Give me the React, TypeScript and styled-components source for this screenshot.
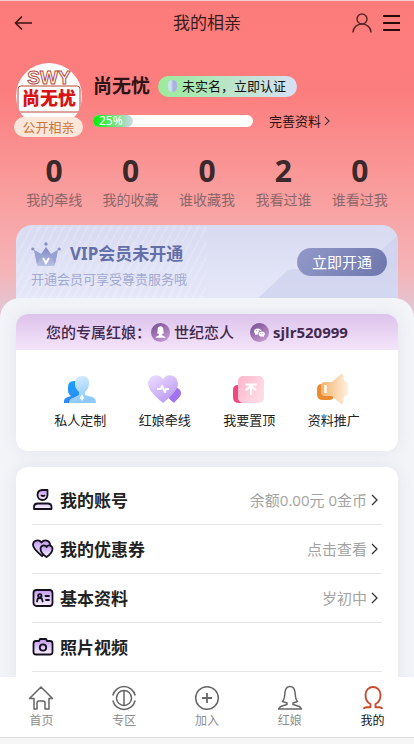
import React from "react";
import styled, { createGlobalStyle } from "styled-components";

const GlobalStyle = createGlobalStyle`
  * { box-sizing: border-box; }
  body {
    margin: 0;
    background: #f5f5f5;
    color: #222;
    font-family: "Noto Sans", "Noto Sans CJK SC", sans-serif;
  }
  button { font: inherit; color: inherit; border: 0; padding: 0; background: none; cursor: pointer; }
  a { color: inherit; text-decoration: none; }
  h1, h2, p { margin: 0; }
  svg { display: block; flex: none; }
`;

const Page = styled.div`
  height: 100vh;
  display: flex;
  flex-direction: column;
  border-top: 1px solid #f3cfcf;
`;

const Content = styled.main`
  flex: 1;
  min-height: 0;
  overflow: hidden auto;
  scrollbar-width: none;
  background: #f3f4f8;
`;

const Hero = styled.section`
  background:
    linear-gradient(to bottom, #fc7c7c 0, #fc7d7d 90px, #f9a0a0 200px, #f6b4b8 270px, #dccbdc 320px);
`;

const Header = styled.header`
  display: grid;
  grid-template-columns: 60px 1fr 60px;
  align-items: center;
  height: 44px;
  padding: 0 12px;
`;

const Title = styled.h1`
  font-size: 17px;
  line-height: 24px;
  font-weight: 400;
  text-align: center;
  color: #3a1c1c;
`;

const HeaderActions = styled.div`
  display: flex;
  justify-content: flex-end;
  align-items: center;
  gap: 9px;
`;

const Profile = styled.div`
  display: flex;
  gap: 10px;
  padding: 18px 16px 0 14px;
`;

const AvatarBlock = styled.div`
  display: flex;
  flex-direction: column;
  align-items: center;
  width: 69px;
`;

const Visibility = styled.button`
  && {
    width: 69px;
    height: 20px;
    margin-top: -12px;
    border-radius: 10px;
    background: #fce6da;
    color: #c87838;
    font-size: 13px;
    line-height: 20px;
    position: relative;
  }
`;

const ProfileInfo = styled.div`
  flex: 1;
  padding-top: 9px;
`;

const NameRow = styled.div`
  display: flex;
  align-items: center;
  gap: 8px;
  height: 28px;
`;

const Name = styled.h2`
  font-size: 19px;
  line-height: 28px;
  font-weight: 700;
  color: #2c1417;
`;

const VerifyButton = styled.button`
  && {
    display: flex;
    align-items: center;
    gap: 5px;
    height: 21px;
    padding: 0 11px 0 10px;
    border-radius: 11px;
    background: linear-gradient(to right, #9beb9b, #d8e0f4);
    color: #111;
    font-size: 13px;
    line-height: 21px;
    font-weight: 400;
  }
`;

const VerifyDot = styled.span`
  width: 9px;
  height: 12px;
  border-radius: 5px;
  background: linear-gradient(to right, #cfe0f0 30%, #a9b3e0 60%);
`;

const ProgressRow = styled.div`
  display: flex;
  align-items: center;
  gap: 16px;
  margin-top: 10px;
`;

const Track = styled.div`
  width: 160px;
  height: 12px;
  border-radius: 6px;
  background: #fff;
`;

const Fill = styled.div`
  display: flex;
  align-items: center;
  height: 12px;
  padding-left: 6px;
  border-radius: 6px;
  background: linear-gradient(to right, #00f000, #cfd8ea);
  color: #fff;
  font-size: 12px;
  line-height: 18px;
`;

const CompleteLink = styled.a`
  display: flex;
  align-items: center;
  gap: 2px;
  font-size: 13px;
  line-height: 22px;
  color: #2a1212;
`;

const Stats = styled.div`
  display: grid;
  grid-template-columns: repeat(5, 1fr);
  padding: 14px 16px 0;
`;

const Stat = styled.a`
  text-align: center;
  font-size: 14px;
  line-height: 20px;
  color: #8e6668;
`;

const StatValue = styled.strong`
  display: block;
  font-size: 30px;
  line-height: 39px;
  font-weight: 700;
  color: #3a282b;
`;

const VipCard = styled.div`
  position: relative;
  display: flex;
  justify-content: space-between;
  height: 93px;
  margin: 15px 16px 0;
  padding: 14px 11px 0 15px;
  border-radius: 16px 16px 0 0;
  overflow: hidden;
  background:
    repeating-linear-gradient(118deg, rgba(255, 255, 255, 0.14) 0 2px, transparent 2px 7px) left / 190px 100% no-repeat,
    linear-gradient(to bottom, #d8dbf1, #e6e8f9 74px);
`;

const VipShade = styled.svg`
  position: absolute;
  right: 0;
  top: 0;
`;

const VipHeading = styled.div`
  display: flex;
  align-items: center;
  gap: 9px;
  height: 30px;
  color: #646fa8;
  font-size: 17px;
  line-height: 30px;
  font-weight: 700;
`;

const VipNote = styled.p`
  font-size: 13px;
  line-height: 20px;
  color: #a1a9d0;
`;

const VipButton = styled.button`
  && {
    position: relative;
    width: 90px;
    height: 28px;
    margin-top: 9px;
    border-radius: 14px;
    background: linear-gradient(120deg, #9299c9, #6e77ac);
    color: #fff;
    font-size: 15px;
    line-height: 28px;
  }
`;

const Sheet = styled.div`
  position: relative;
  display: grid;
  gap: 16px;
  margin-top: -20px;
  padding: 16px 16px 0;
  border-radius: 20px 20px 0 0;
  background: #f3f4f8;
`;

const Card = styled.section`
  border-radius: 12px;
  overflow: hidden;
  background: #fff;
  box-shadow: 0 0 16px rgba(90, 100, 130, 0.1);
`;

const Matchmaker = styled.div`
  display: flex;
  align-items: center;
  height: 36px;
  padding-left: 30px;
  background: linear-gradient(to bottom, #ddc3ec, #f4e4fa);
  color: #43294e;
  font-size: 15px;
  line-height: 36px;
  font-weight: 500;
`;

const Contact = styled.span<{ $bold?: boolean }>`
  display: flex;
  align-items: center;
  gap: 4px;
  margin-right: 16px;
  font-family: ${(p) => (p.$bold ? '"Open Sans", "Noto Sans CJK SC", sans-serif' : "inherit")};
  font-weight: ${(p) => (p.$bold ? 700 : 500)};
`;

const Services = styled.div`
  display: grid;
  grid-template-columns: repeat(4, 1fr);
  padding: 20px 22px;
`;

const Service = styled.a`
  display: flex;
  flex-direction: column;
  align-items: center;
  height: 61px;
  font-size: 13px;
  line-height: 20px;
`;

const Menu = styled(Card)`
  padding: 9px 16px 30px;
`;

const MenuRow = styled.a`
  display: flex;
  align-items: center;
  height: 49px;
  border-bottom: 1px solid #e6e6e8;
`;

const MenuName = styled.span`
  flex: 1;
  padding: 2px 0 0 6px;
  font-size: 17px;
  line-height: 26px;
  font-weight: 700;
`;

const MenuValue = styled.span`
  padding-right: 3px;
  font-family: "Open Sans", "Noto Sans CJK SC", sans-serif;
  font-size: 15px;
  line-height: 24px;
  color: #a3a3a3;
`;

const TabBar = styled.nav`
  display: grid;
  grid-template-columns: repeat(5, 1fr);
  height: 61px;
  padding-top: 8px;
  margin-bottom: 6px;
  background: #fff;
  border-bottom: 1px solid #dedede;
`;

const Tab = styled.a<{ $active?: boolean }>`
  display: flex;
  flex-direction: column;
  align-items: center;
  font-size: 12px;
  line-height: 20px;
  color: ${(p) => (p.$active ? "#111" : "#8d8d8d")};
`;

const ValueChevron = styled.span`
  padding-right: 3px;
`;

const Chevron = ({ size = 12 }: { size?: number }) => (
  <svg width={size / 2 + 3} height={size} viewBox="0 0 9 12" fill="none" stroke="#333" strokeWidth="1.3">
    <path d="M2 1l5 5-5 5" />
  </svg>
);

const Avatar = () => (
  <svg width="66" height="66" viewBox="0 0 66 66" role="img" aria-label="SWY 尚无忧">
    <clipPath id="round"><circle cx="33" cy="33" r="33" /></clipPath>
    <g clipPath="url(#round)">
      <rect width="66" height="66" fill="#fff" />
      <text x="33" y="21" textAnchor="middle" fontFamily="Liberation Sans" fontWeight="700" fontSize="19" fill="#fff" stroke="#b84a40" strokeWidth="1">SWY</text>
      <path d="M2 49V26q0-3 3-3h56q3 0 3 3v23z" fill="none" stroke="#b8453c" />
      <text x="33" y="42" textAnchor="middle" fontFamily="Noto Sans CJK SC" fontWeight="900" fontSize="18" fill="#d81414">尚无忧</text>
    </g>
  </svg>
);

const Crown = () => (
  <svg width="30" height="25" viewBox="0 0 30 25">
    <defs>
      <linearGradient id="crown" x2="0" y2="1"><stop stopColor="#7d88c2" /><stop offset="1" stopColor="#b9c0e5" /></linearGradient>
    </defs>
    <path d="M3 8l7 4 5-7 5 7 7-4-3 14q0 2-2 2H8q-2 0-2-2z" fill="url(#crown)" />
    <path d="M3 8l7 4-4 10zM27 8l-7 4 4 10z" fill="#98a2d4" />
    <g fill="#8790c4"><circle cx="15" cy="2" r="1.7" /><circle cx="1.8" cy="7" r="1.6" /><circle cx="28.2" cy="7" r="1.6" /></g>
    <path d="M12 16l3 5 3-5" fill="none" stroke="#fff" strokeWidth="2" />
  </svg>
);

const womanPath = "M9.8 16.5H8.5c1-1.5.6-3 1-5C9.500 6 12 5 14 5s4.500 1 4.500 6.500c.4 2 0 3.500 1 5h-1.300l-1.700 1v2l5 2.500v1.500h-15V22l5-2.500v-2z";

const RoundIcon = ({ kind }: { kind: "woman" | "chat" }) => (
  <svg width="19" height="19" viewBox="0 0 28 28">
    <defs><linearGradient id="plum" x2="0.600" y2="1"><stop stopColor="#754a8e" /><stop offset="1" stopColor="#c197ce" /></linearGradient></defs>
    <circle cx="14" cy="14" r="14" fill="url(#plum)" />
    {kind === "woman" ? (
      <path d={womanPath} transform="translate(1 0) scale(.93)" fill="#fff" />
    ) : (
      <g fill="#fff">
        <path d="M11.500 8C8.300 8 6 10 6 12.500c0 1.500.8 2.700 2 3.500l-.5 2 2.300-1.200 2 .2C11.500 13.500 13.500 11.500 17 11.500 16.500 9.500 14.300 8 11.500 8z" />
        <path d="M17.300 12.500c-2.700 0-4.700 1.700-4.700 3.800s2 3.800 4.700 3.800l1.500-.2 1.800 1-.4-1.700c1.100-.7 1.800-1.700 1.800-2.900 0-2.100-2-3.800-4.700-3.800z" />
        <g fill="#8c62a2"><circle cx="9.700" cy="11.500" r=".8" /><circle cx="13.500" cy="11.500" r=".8" /><circle cx="15.800" cy="15.500" r=".7" /><circle cx="19" cy="15.500" r=".7" /></g>
      </g>
    )}
  </svg>
);

const ServiceIcon = ({ kind }: { kind: string }) => (
  <svg width="40" height="40" viewBox="0 0 40 40">
    <defs>
      <linearGradient id="blue" x2="0" y2="1"><stop stopColor="#18a0ff" /><stop offset="1" stopColor="#3188f4" /></linearGradient>
      <linearGradient id="ice" x2="0.300" y2="1"><stop stopColor="#d9efff" /><stop offset="1" stopColor="#8dc9fc" /></linearGradient>
      <linearGradient id="lilac" x2="0.700" y2="1"><stop stopColor="#eee1ff" /><stop offset="1" stopColor="#bc98f2" /></linearGradient>
      <linearGradient id="rose" x2="1" y2="0.500"><stop stopColor="#ffb4cb" /><stop offset="1" stopColor="#ffdce6" /></linearGradient>
      <linearGradient id="peach" x2="1"><stop stopColor="#f5b36d" /><stop offset="1" stopColor="#fff0dd" /></linearGradient>
    </defs>
    {kind === "person" && (
      <g>
        <path d="M8 17q0-6 6-6h6v16q-3 2-6 6H4v-2q0-3 4-4l3-1q-3-2-3-6z" fill="url(#blue)" />
        <path d="M22 6c5 0 7.500 3 7 8-.3 4-2 6-4 8v3l7 2q4 1 4 6H9q0-4 4-5l6-3v-3c-2-2-4-4-4-8 0-5 2-8 7-8z" fill="url(#ice)" />
        <path d="M22 24l2 4-2 3-2-3z" fill="#fff" />
      </g>
    )}
    {kind === "heart" && (
      <g>
        <path d="M28 18c4-1 8 1 8 5s-3 5-7 10q-4-3-6-6z" fill="#a372ee" />
        <path d="M18 33Q3 21 3 14C3 5 14 2 18 9 22 2 33 5 33 14q0 7-15 19z" fill="url(#lilac)" />
        <path d="M12 19h4l1-3 3 6 1-3h3" fill="none" stroke="#fff" strokeWidth="2" strokeLinejoin="round" />
      </g>
    )}
    {kind === "top" && (
      <g>
        <path d="M9 15h8v18h-7q-6 0-6-6v-7q0-5 5-5z" fill="#ee497f" />
        <rect x="9" y="6" width="26" height="27" rx="5" fill="url(#rose)" />
        <path d="M16.500 14.500h11M22 25v-9M17 20l5-4 5 4" fill="none" stroke="#fff" strokeWidth="2.200" />
      </g>
    )}
    {kind === "horn" && (
      <g>
        <path d="M8 14h12v11q0 5-5 5H9q-6 0-6-6v-5q0-5 5-5z" fill="#ea8b30" />
        <path d="M11 12h7l9-8q2-1 2 1l1 5 4 3v11l-4 3-1 6q0 2-2 1l-9-8h-7q-4 0-4-4v-6q0-4 4-4z" fill="url(#peach)" />
        <path d="M11.500 15v8" stroke="#fff" strokeWidth="2.400" />
      </g>
    )}
  </svg>
);

const MenuIcon = ({ kind }: { kind: string }) => (
  <svg width="22" height="22" viewBox="0 0 22 22" fill="url(#soft)" stroke="#15101e" strokeWidth="1.800" strokeLinejoin="round" strokeLinecap="round">
    <defs><linearGradient id="soft" x2="0" y2="1"><stop stopColor="#c29bed" /><stop offset="1" stopColor="#f8f0ff" /></linearGradient></defs>
    {kind === "account" && (
      <g><path d="M5.500 6q0-5 5-5h5v5a5 5 0 0 1-10 0z" /><path d="M9.500 6.500q1.500 1 3 0M2 20v-2q0-3.500 4-3.500h9.500q4 0 4 3.500v2z" /></g>
    )}
    {kind === "coupon" && (
      <g><path d="M10 18C4 13 1 10 1 7c0-5 6-6 8.500-2.500C12 1 18 2 18 7c0 3-2 6-8 11z" /><path d="M14.500 19q-6-4-6-8c0-4 4.500-4.500 6-2 1.500-2.500 6-2 6 2q0 4-6 8z" /></g>
    )}
    {kind === "card" && (
      <g><rect x="1.500" y="3" width="19" height="16" rx="3" /><path d="M5 14.500l.8-3q2-1 4 0l.8 3M13.500 9H17M14 13h3" /><circle cx="7.800" cy="8.800" r="1.700" /></g>
    )}
    {kind === "camera" && (
      <g><path d="M7 5l1-2h6l1 2h3q2.500 0 2.500 2.500V16q0 2.500-2.500 2.500H4Q1.500 18.500 1.500 16V7.500Q1.500 5 4 5z" /><circle cx="11" cy="11.500" r="3.200" /></g>
    )}
  </svg>
);

const TabIcon = ({ kind }: { kind: string }) => (
  <svg width="26" height="26" viewBox="0 0 26 26" fill="none" stroke={kind === "me" ? "#c94b2f" : "#666"} strokeWidth="1.500" strokeLinejoin="round">
    {kind === "home" && <path d="M1.500 13.500L13 2l11.500 11.500H21V24h-4v-6q0-2-2-2h-4q-2 0-2 2v6H6V13.500z" />}
    {kind === "zone" && (
      <g><circle cx="13" cy="13" r="7.500" /><path d="M13 5.500v15M1.800 10.500A11.500 11.500 0 0 1 24.200 10.500M1.800 15.500a11.500 11.500 0 0 0 22.400 0" /></g>
    )}
    {kind === "join" && <g><circle cx="13" cy="13" r="11.300" /><path d="M13 8v10M8 13h10" strokeWidth="1.800" /></g>}
    {kind === "woman" && <path d="M5.500 16.500C8 14 7.500 10 8 7c.6-4 2.500-5.500 5-5.500S17.400 3 18 7c.5 3 0 7 2.500 9.500L16 18v1.500l6.500 2 2 2.500h-23l2-2.500 6.500-2V18z" />}
    {kind === "me" && <path d="M4 24q0-1.800 3-1.800h3.500v-3C7 17.500 5.500 13.500 5.500 9.800 5.500 5 9 2 13 2s7.500 3 7.500 7.800c0 3.700-1.500 7.700-5 9.400v3H19q3 0 3 1.800" strokeWidth="1.900" />}
  </svg>
);

const stats = [["0", "我的牵线"], ["0", "我的收藏"], ["0", "谁收藏我"], ["2", "我看过谁"], ["0", "谁看过我"]];
const services = [["person", "私人定制"], ["heart", "红娘牵线"], ["top", "我要置顶"], ["horn", "资料推广"]];
const menu = [["account", "我的账号", "余额0.00元 0金币"], ["coupon", "我的优惠券", "点击查看"], ["card", "基本资料", "岁初中"], ["camera", "照片视频", ""]];
const tabs = [["home", "首页"], ["zone", "专区"], ["join", "加入"], ["woman", "红娘"], ["me", "我的"]];
const progress = 25;

export default function App() {
  return (
    <Page>
      <GlobalStyle />
      <Content>
        <Hero>
          <Header>
            <button aria-label="返回">
              <svg width="22" height="18" viewBox="0 0 22 18" fill="none" stroke="#391313" strokeWidth="1.500"><path d="M10 2.500L3.500 9l6.500 6.500M3.500 9H20" /></svg>
            </button>
            <Title>我的相亲</Title>
            <HeaderActions>
              <button aria-label="个人">
                <svg width="22" height="22" viewBox="0 0 22 22" fill="none" stroke="#5a2828" strokeWidth="1.500"><circle cx="11" cy="7" r="5" /><path d="M2 20.500c0-5 4-8.500 9-8.500s9 3.500 9 8.500" /></svg>
              </button>
              <button aria-label="菜单">
                <svg width="20" height="18" viewBox="0 0 20 18" stroke="#230b0b" strokeWidth="2"><path d="M1 2h17M1 9h17M1 16h17" /></svg>
              </button>
            </HeaderActions>
          </Header>
          <Profile>
            <AvatarBlock>
              <Avatar />
              <Visibility>公开相亲</Visibility>
            </AvatarBlock>
            <ProfileInfo>
              <NameRow>
                <Name>尚无忧</Name>
                <VerifyButton><VerifyDot />未实名，立即认证</VerifyButton>
              </NameRow>
              <ProgressRow>
                <Track role="progressbar" aria-label="资料完善度" aria-valuenow={progress}>
                  <Fill style={{ width: `${progress}%` }}>{progress}%</Fill>
                </Track>
                <CompleteLink href="#profile">完善资料<Chevron size={10} /></CompleteLink>
              </ProgressRow>
            </ProfileInfo>
          </Profile>
          <Stats>
            {stats.map(([value, label]) => (
              <Stat key={label} href="#stats"><StatValue>{value}</StatValue>{label}</Stat>
            ))}
          </Stats>
          <VipCard>
            <VipShade width="142" height="93" viewBox="0 0 142 93" aria-hidden="true">
              <path d="M142 10L104 44H38q-5 0-8 3L0 75v18h142z" fill="#cdd0ed" fillOpacity="0.700" />
            </VipShade>
            <div>
              <VipHeading><Crown />VIP会员未开通</VipHeading>
              <VipNote>开通会员可享受尊贵服务哦</VipNote>
            </div>
            <VipButton>立即开通</VipButton>
          </VipCard>
        </Hero>
        <Sheet>
          <Card>
            <Matchmaker>
              您的专属红娘：
              <Contact><RoundIcon kind="woman" />世纪恋人</Contact>
              <Contact $bold><RoundIcon kind="chat" />sjlr520999</Contact>
            </Matchmaker>
            <Services>
              {services.map(([kind, label]) => (
                <Service key={kind} href="#service"><ServiceIcon kind={kind} />{label}</Service>
              ))}
            </Services>
          </Card>
          <Menu>
            {menu.map(([kind, label, value]) => (
              <MenuRow key={kind} href="#menu">
                <MenuIcon kind={kind} />
                <MenuName>{label}</MenuName>
                {value && <><MenuValue>{value}</MenuValue><ValueChevron><Chevron /></ValueChevron></>}
              </MenuRow>
            ))}
          </Menu>
        </Sheet>
      </Content>
      <TabBar>
        {tabs.map(([kind, label]) => (
          <Tab key={kind} href="#tab" $active={kind === "me"}><TabIcon kind={kind} />{label}</Tab>
        ))}
      </TabBar>
    </Page>
  );
}
